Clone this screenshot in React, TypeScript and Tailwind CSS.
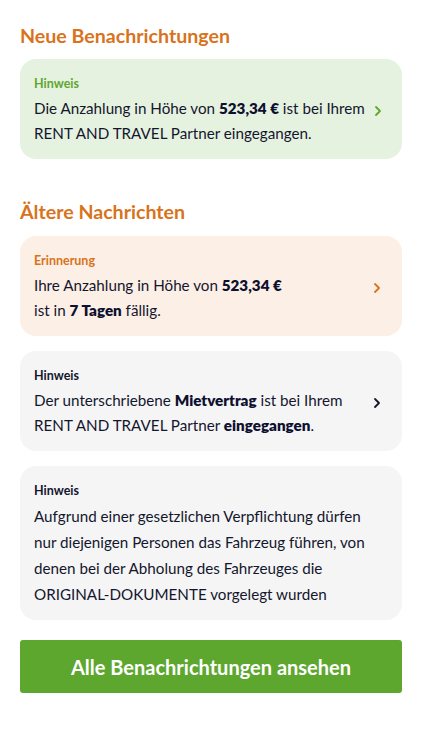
import React from 'react';

function Chevron({ color }: { color: string }) {
  return (
    <svg width="10" height="14" viewBox="0 0 10 14" fill="none" className="shrink-0">
      <path d="M3 3l4 4-4 4" stroke={color} strokeWidth="1.8" strokeLinecap="round" strokeLinejoin="round" />
    </svg>
  );
}

function B({ children }: { children: React.ReactNode }) {
  return <span className="font-extrabold text-[#0e1030]">{children}</span>;
}

function Card({
  label,
  labelClass,
  bg,
  chevron,
  children,
}: {
  label: string;
  labelClass: string;
  bg: string;
  chevron?: string;
  children: React.ReactNode;
}) {
  return (
    <div className={`rounded-2xl ${bg} pl-[14px] pr-[20px] pt-4 pb-[13px] flex items-center gap-2`}>
      <div className="flex-1 whitespace-nowrap">
        <div className={`text-[12.5px] font-bold leading-[18px] ${labelClass}`}>{label}</div>
        <div className="text-[15.2px] leading-[25px] text-[#14162e] mt-[3px]">{children}</div>
      </div>
      {chevron && <Chevron color={chevron} />}
    </div>
  );
}

export default function App() {
  return (
    <div className="w-[422px] h-[750px] bg-white px-5 pt-[23px] font-['Lato',sans-serif]">
      <h2 className="text-[19.6px] font-bold leading-[26px] text-[#d8731c]">Neue Benachrichtungen</h2>
      <div className="mt-[10px]">
        <Card label="Hinweis" labelClass="text-[#5ea72f]" bg="bg-[#e6f2e0]" chevron="#5ea72f">
          Die Anzahlung in Höhe von <B>523,34 €</B> ist bei Ihrem
          <br />
          RENT AND TRAVEL Partner eingegangen.
        </Card>
      </div>

      <h2 className="text-[19.6px] font-bold leading-[26px] text-[#d8731c] mt-10">Ältere Nachrichten</h2>
      <div className="mt-[11px] flex flex-col gap-[15px]">
        <Card label="Erinnerung" labelClass="text-[#d8731c]" bg="bg-[#fcefe6]" chevron="#d8731c">
          Ihre Anzahlung in Höhe von <B>523,34 €</B>
          <br />
          ist in <B>7 Tagen</B> fällig.
        </Card>
        <Card label="Hinweis" labelClass="text-[#14162e]" bg="bg-[#f5f5f5]" chevron="#14162e">
          Der unterschriebene <B>Mietvertrag</B> ist bei Ihrem
          <br />
          RENT AND TRAVEL Partner <B>eingegangen</B>.
        </Card>
        <Card label="Hinweis" labelClass="text-[#14162e]" bg="bg-[#f5f5f5]">
          <span className="leading-[26px]">
            Aufgrund einer gesetzlichen Verpflichtung dürfen
            <br />
            nur diejenigen Personen das Fahrzeug führen, von
            <br />
            denen bei der Abholung des Fahrzeuges die
            <br />
            ORIGINAL-DOKUMENTE vorgelegt wurden
          </span>
        </Card>
      </div>

      <button className="mt-[20px] w-full h-[53px] rounded-[3px] bg-[#5ea72f] text-white text-[20px] font-bold">
        Alle Benachrichtungen ansehen
      </button>
    </div>
  );
}
